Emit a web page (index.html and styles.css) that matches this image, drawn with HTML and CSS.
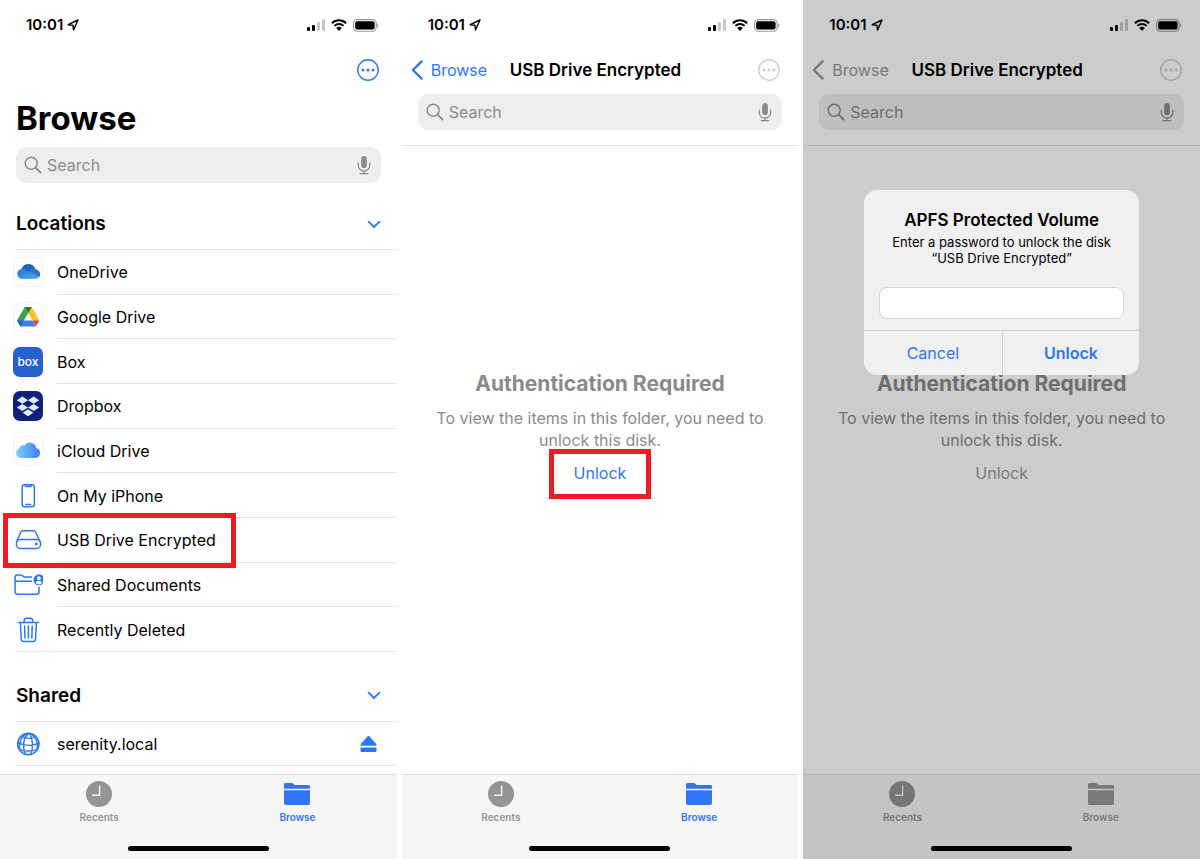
FILE: index.html
```html
<!DOCTYPE html>
<html lang="en">
<head>
  <meta charset="UTF-8">
  <meta name="viewport" content="width=device-width, initial-scale=1.0">
  <title>Files - USB Drive Encrypted</title>
  <link rel="stylesheet" href="styles.css">
</head>
<body>

<!-- Shared icons -->
<svg class="sprite" aria-hidden="true">
  <symbol id="arrow" viewBox="0 0 12 12">
    <path d="M11 1 1.200 5.700 6 6.200 6.500 11Z" fill="none" stroke="currentColor" stroke-width="1.400" stroke-linejoin="round"/>
  </symbol>
  <symbol id="signal" viewBox="0 0 18 12">
    <rect x="0" y="8" width="3" height="4" rx="1"/>
    <rect x="5" y="6" width="3" height="6" rx="1"/>
    <rect x="10" y="3" width="3" height="9" rx="1" opacity=".22"/>
    <rect x="15" y="0" width="3" height="12" rx="1" opacity=".22"/>
  </symbol>
  <symbol id="wifi" viewBox="0 0 16 12">
    <path d="M.9 4.2a10.2 10.2 0 0 1 14.2 0M3.4 6.9a6.6 6.6 0 0 1 9.2 0" fill="none" stroke="currentColor" stroke-width="2"/>
    <path d="M5.2 9.1a4.1 4.1 0 0 1 5.6 0L8 12Z"/>
  </symbol>
  <symbol id="battery" viewBox="0 0 26 13">
    <rect x=".6" y=".6" width="22.6" height="11.6" rx="3.6" fill="none" stroke="currentColor" stroke-width="1.1" opacity=".4"/>
    <rect x="2.2" y="2.2" width="19.4" height="8.4" rx="2"/>
    <path d="M24.3 4.4v4c1.4-.6 1.4-3.4 0-4Z" opacity=".45"/>
  </symbol>
  <symbol id="more" viewBox="0 0 22 22">
    <circle cx="11" cy="11" r="10.2" fill="none" stroke="currentColor" stroke-width="1.4"/>
    <circle cx="6" cy="11" r="1.5"/><circle cx="11" cy="11" r="1.5"/><circle cx="16" cy="11" r="1.5"/>
  </symbol>
  <symbol id="search" viewBox="0 0 18 18">
    <circle cx="7.2" cy="7.2" r="6" fill="none" stroke="currentColor" stroke-width="1.4"/>
    <path d="m11.6 11.6 4.9 4.9" stroke="currentColor" stroke-width="1.8" stroke-linecap="round"/>
  </symbol>
  <symbol id="mic" viewBox="0 0 14 20">
    <rect x="4.2" y="1" width="5.6" height="12" rx="2.8"/>
    <path d="M1.3 8.2v2.2a5.7 5.7 0 0 0 11.4 0V8.2M7 16v2.6M3.2 18.6h7.6" fill="none" stroke="currentColor" stroke-width="1.2" stroke-linecap="round"/>
  </symbol>
  <symbol id="down" viewBox="0 0 14 9">
    <path d="m1.6 1.6 5.4 5.4 5.4-5.4" fill="none" stroke="currentColor" stroke-width="1.8" stroke-linecap="round" stroke-linejoin="round"/>
  </symbol>
  <symbol id="back" viewBox="0 0 12 20">
    <path d="M10.6 1.4 1.9 10l8.7 8.6" fill="none" stroke="currentColor" stroke-width="2.4" stroke-linecap="round" stroke-linejoin="round"/>
  </symbol>
  <symbol id="clock" viewBox="0 0 26 26">
    <circle cx="13" cy="13" r="13"/>
    <path d="M13.6 4.4v9.8H6.2" fill="none" stroke="var(--bar)" stroke-width="1.4"/>
  </symbol>
  <symbol id="folder" viewBox="0 0 26 22">
    <path d="M0 5.8V1.6C0 .6.6 0 1.6 0h5.8c1 0 1.4.3 2.1.9l.9.8c.4.3.8.4 1.4.4h12.600c1 0 1.600.6 1.600 1.600v2.100Z"/>
    <path d="M0 7.200h26v12.800c0 1.200-.7 1.900-1.900 1.900H1.900C.7 21.900 0 21.200 0 20Z"/>
  </symbol>
</svg>

<main class="screens">

  <!-- Browse list -->
  <section class="screen">
    <div class="status">
      <span class="time">10:01</span>
      <svg class="i-arrow"><use href="#arrow"/></svg>
      <svg class="i-signal"><use href="#signal"/></svg>
      <svg class="i-wifi"><use href="#wifi"/></svg>
      <svg class="i-battery"><use href="#battery"/></svg>
    </div>
    <div class="toolbar">
      <button class="more" aria-label="More"><svg><use href="#more"/></svg></button>
    </div>
    <h1>Browse</h1>
    <label class="search">
      <svg class="i-search"><use href="#search"/></svg>
      <input type="search" placeholder="Search" aria-label="Search">
      <svg class="i-mic"><use href="#mic"/></svg>
    </label>

    <div class="group">
      <h2>Locations</h2>
      <button class="toggle" aria-label="Collapse Locations"><svg><use href="#down"/></svg></button>
    </div>
    <ul class="list locations">
      <li>
        <a href="#">
          <span class="icon tile">
            <svg viewBox="0 0 30 30">
              <defs>
                <linearGradient id="od" x1="0" y1="0" x2="1" y2="1">
                  <stop offset="0" stop-color="#3a8de0"/><stop offset="1" stop-color="#3fa0ea"/>
                </linearGradient>
              </defs>
              <path d="M8.200 12.200C9.500 8.900 12.300 7 15.400 7c3.600 0 6.300 2.300 7.100 5.400L18 17Z" fill="#2163b8"/>
              <path d="M9 21.800a5 5 0 0 1-.6-9.900c1.500-.4 3.100 0 4.300.8l8 5-9 4.100Z" fill="#2f7fd6"/>
              <path d="m14.400 13.700 3.200-1.400c1.300-.6 3.200-.7 4.900-.1 2.800.4 4.700 2.500 4.700 5 0 1.200-.4 2.200-1.100 3Z" fill="#2f6fd0"/>
              <path d="m5 19.800 11-5.200 10.200 5.500c-.9 1.100-2.100 1.700-3.700 1.700H8.900c-1.600 0-3-.8-3.900-2Z" fill="url(#od)"/>
            </svg>
          </span>
          <span>OneDrive</span>
        </a>
      </li>
      <li>
        <a href="#">
          <span class="icon tile">
            <svg viewBox="0 0 30 30">
              <path d="M11.700 5 4 18.400l3.600 6L15.200 11Z" fill="#3fa34d"/>
              <path d="M18.700 5h-3.500v6l4.100 7.400h7.100Z" fill="#f9bd2f"/>
              <path d="M11.700 5h7l-3.500 6Z" fill="#1d7a35"/>
              <path d="M26.400 18.400h-7.100l3.400 6Z" fill="#e0453a"/>
              <path d="M4 18.400h15.300l3.400 6H7.600Z" fill="#3f7fee"/>
              <path d="m4 18.400 3.600 6 3.500-6Z" fill="#2765d0"/>
            </svg>
          </span>
          <span>Google Drive</span>
        </a>
      </li>
      <li>
        <a href="#">
          <span class="icon tile box" aria-hidden="true">box</span>
          <span>Box</span>
        </a>
      </li>
      <li>
        <a href="#">
          <span class="icon tile dropbox">
            <svg viewBox="0 0 30 30">
              <path d="m9.400 5.600 5.600 3.600-5.600 3.600-5.600-3.600ZM20.600 5.600l5.600 3.600-5.600 3.600L15 9.200ZM9.400 12.900l5.600 3.600-5.600 3.600-5.600-3.600ZM20.600 12.900l5.600 3.600-5.600 3.600-5.600-3.600ZM15 18.300l5.400 3.500-5.400 3.500-5.400-3.500Z" fill="#d9f1fb"/>
            </svg>
          </span>
          <span>Dropbox</span>
        </a>
      </li>
      <li>
        <a href="#">
          <span class="icon tile">
            <svg viewBox="0 0 30 30">
              <defs>
                <linearGradient id="ic">
                  <stop offset="0" stop-color="#7fd0f8"/><stop offset="1" stop-color="#3f7cee"/>
                </linearGradient>
              </defs>
              <path d="M8 22a5 5 0 0 1-2-9.500 4 4 0 0 1 5.400-3A6.500 6.500 0 0 1 23.200 12 5.100 5.100 0 0 1 22.500 22Z" fill="url(#ic)"/>
            </svg>
          </span>
          <span>iCloud Drive</span>
        </a>
      </li>
      <li>
        <a href="#">
          <span class="icon">
            <svg viewBox="0 0 30 30" class="line">
              <rect x="9.200" y="3.700" width="12.200" height="22" rx="2.200"/>
              <path d="M12.200 4v.6c0 .6.4.9.9.9h4.400c.5 0 .9-.3.9-.9V4M12.800 23.600h5"/>
            </svg>
          </span>
          <span>On My iPhone</span>
        </a>
      </li>
      <li>
        <a href="#" class="marked">
          <span class="icon">
            <svg viewBox="0 0 30 30" class="line">
              <path d="M3.800 16.500 7.600 7.500c.5-1.200 1.300-1.700 2.500-1.700h10.200c1.200 0 2 .5 2.500 1.700l4.200 9"/>
              <rect x="3.400" y="14.600" width="24.200" height="8.800" rx="4"/>
              <circle cx="23.200" cy="19" r="1.400" fill="currentColor" stroke="none"/>
            </svg>
          </span>
          <span>USB Drive Encrypted</span>
        </a>
      </li>
      <li>
        <a href="#">
          <span class="icon">
            <svg viewBox="0 0 30 30" class="line">
              <path d="M26 17.300v4.500c0 1.600-.9 2.500-2.500 2.500H4.600c-1.600 0-2.500-.9-2.500-2.500V7.500C2.100 6 3 5 4.600 5h2.800c.8 0 1.300.2 1.900.7l.9.7c.6.500 1.100.7 1.900.7H18.500M2.300 11.300H18.500"/>
              <circle cx="25.900" cy="9.800" r="5.500" fill="currentColor" stroke="none"/>
              <circle cx="25.900" cy="8.200" r="1.900" fill="#fff" stroke="none"/>
              <path d="M22.700 13c.3-1.600 1.500-2.300 3.200-2.300s2.900.7 3.200 2.300a4.700 4.700 0 0 1-6.400 0Z" fill="#fff" stroke="none"/>
            </svg>
          </span>
          <span>Shared Documents</span>
        </a>
      </li>
      <li>
        <a href="#">
          <span class="icon">
            <svg viewBox="0 0 30 30" class="line">
              <path d="M5.400 7.600h20M11.200 7.400V5.100c0-1.200.7-1.900 1.900-1.900h4.600c1.200 0 1.900.7 1.900 1.900v2.300M7.400 7.800l.9 16.500c.1 1.500.9 2.300 2.300 2.300h9.600c1.400 0 2.200-.8 2.300-2.300l.9-16.500M11.600 11l.4 12.200M15.400 11v12.200M19.200 11l-.4 12.200"/>
            </svg>
          </span>
          <span>Recently Deleted</span>
        </a>
      </li>
    </ul>

    <div class="group">
      <h2>Shared</h2>
      <button class="toggle" aria-label="Collapse Shared"><svg><use href="#down"/></svg></button>
    </div>
    <ul class="list servers">
      <li>
        <a href="#">
          <span class="icon">
            <svg viewBox="0 0 30 30" class="line">
              <circle cx="15.300" cy="15" r="10.700"/>
              <path d="M15.500 4.400c-5 4.400-6.500 12.500-3.200 20.600M16.500 4.400c3.400 5 4 13.500 1.300 21M18 4.700c5 3 7.500 9.500 6 15.300M13.500 4.600C8.700 7 5.600 13 6.800 21M8.300 7.200c4.600 2.600 10.500 2.600 14.400 0M4.800 13.500c6 3.700 15 3.800 21.200.5M6.500 20.800c5.500 1.500 12.500 1.500 17.700-.2"/>
            </svg>
          </span>
          <span>serenity.local</span>
        </a>
        <button class="eject" aria-label="Eject serenity.local">
          <svg viewBox="0 0 16 16"><path d="M8 0c.4 0 .7.200 1 .5l6.600 7.300c.8.900.4 1.900-.7 1.900H1.100C0 9.700-.4 8.700.4 7.800L7 .5c.3-.3.6-.5 1-.5Z"/><rect y="11.600" width="16" height="4.400" rx="1"/></svg>
        </button>
      </li>
    </ul>

    <footer>
      <nav class="tabs">
        <a href="#"><svg class="i-clock"><use href="#clock"/></svg>Recents</a>
        <a href="#" class="active"><svg class="i-folder"><use href="#folder"/></svg>Browse</a>
      </nav>
      <div class="home"></div>
    </footer>
  </section>

  <!-- Locked drive -->
  <section class="screen">
    <div class="status">
      <span class="time">10:01</span>
      <svg class="i-arrow"><use href="#arrow"/></svg>
      <svg class="i-signal"><use href="#signal"/></svg>
      <svg class="i-wifi"><use href="#wifi"/></svg>
      <svg class="i-battery"><use href="#battery"/></svg>
    </div>
    <div class="toolbar">
      <a href="#" class="back"><svg><use href="#back"/></svg>Browse</a>
      <h3>USB Drive Encrypted</h3>
      <button class="more" aria-label="More" disabled><svg><use href="#more"/></svg></button>
    </div>
    <label class="search">
      <svg class="i-search"><use href="#search"/></svg>
      <input type="search" placeholder="Search" aria-label="Search">
      <svg class="i-mic"><use href="#mic"/></svg>
    </label>
    <div class="locked">
      <h2>Authentication Required</h2>
      <p>To view the items in this folder, you need to unlock this disk.</p>
      <button class="unlock marked">Unlock</button>
    </div>
    <footer>
      <nav class="tabs">
        <a href="#"><svg class="i-clock"><use href="#clock"/></svg>Recents</a>
        <a href="#" class="active"><svg class="i-folder"><use href="#folder"/></svg>Browse</a>
      </nav>
      <div class="home"></div>
    </footer>
  </section>

  <!-- Password prompt -->
  <section class="screen inactive">
    <div class="status">
      <span class="time">10:01</span>
      <svg class="i-arrow"><use href="#arrow"/></svg>
      <svg class="i-signal"><use href="#signal"/></svg>
      <svg class="i-wifi"><use href="#wifi"/></svg>
      <svg class="i-battery"><use href="#battery"/></svg>
    </div>
    <div class="toolbar">
      <a href="#" class="back"><svg><use href="#back"/></svg>Browse</a>
      <h3>USB Drive Encrypted</h3>
      <button class="more" aria-label="More" disabled><svg><use href="#more"/></svg></button>
    </div>
    <label class="search">
      <svg class="i-search"><use href="#search"/></svg>
      <input type="search" placeholder="Search" aria-label="Search">
      <svg class="i-mic"><use href="#mic"/></svg>
    </label>
    <div class="locked">
      <h2>Authentication Required</h2>
      <p>To view the items in this folder, you need to unlock this disk.</p>
      <button class="unlock">Unlock</button>
    </div>
    <footer>
      <nav class="tabs">
        <a href="#"><svg class="i-clock"><use href="#clock"/></svg>Recents</a>
        <a href="#" class="active"><svg class="i-folder"><use href="#folder"/></svg>Browse</a>
      </nav>
      <div class="home"></div>
    </footer>

    <div class="overlay">
      <form class="dialog" role="dialog" aria-labelledby="dialog-title">
        <h3 id="dialog-title">APFS Protected Volume</h3>
        <label for="password">Enter a password to unlock the disk “USB Drive Encrypted”</label>
        <input type="password" id="password">
        <div class="actions">
          <button type="button">Cancel</button>
          <button type="submit" class="primary">Unlock</button>
        </div>
      </form>
    </div>
  </section>

</main>

</body>
</html>
```
FILE: styles.css
```css
* {
  box-sizing: border-box;
}

body {
  margin: 0;
  font-family: Inter, "Liberation Sans", sans-serif;
  font-size: 16px;
  line-height: 22px;
  color: #000;
  background-color: #fff;
}

h1, h2, h3, p, ul {
  margin: 0;
  padding: 0;
}

a {
  color: inherit;
  text-decoration: none;
}

button {
  padding: 0;
  border: none;
  background: none;
  font: inherit;
  color: inherit;
  cursor: pointer;
}

svg {
  display: block;
  flex: none;
  fill: currentColor;
}

.sprite {
  display: none;
}

.screens {
  display: grid;
  grid-template-columns: repeat(3, 1fr);
  gap: 5px;
  min-height: 100vh;
}

.screen {
  --tint: #2f76f6;
  --gray: #8a8a8e;
  --line: #e4e4e6;
  --bar: #f6f6f6;
  display: flex;
  flex-direction: column;
  position: relative;
  min-width: 0;
}

/* Controls lose their tint behind the dialog */
.inactive {
  --tint: #98989c;
}

/* Status bar */
.status {
  display: flex;
  align-items: center;
  height: 50px;
  padding: 0 18px 0 26px;
}

.time {
  font-weight: 600;
  font-size: 15px;
}

.i-arrow {
  width: 12px;
  height: 12px;
  margin: 0 auto 0 4px;
}

.i-signal {
  width: 18px;
  height: 12px;
}

.i-wifi {
  width: 16px;
  height: 12px;
  margin: 0 6px;
}

.i-battery {
  width: 26px;
  height: 13px;
}

/* Navigation bar */
.toolbar {
  display: grid;
  grid-template-columns: 1fr auto 1fr;
  align-items: center;
  height: 40px;
  padding: 0 18px 0 9px;
}

.toolbar h3 {
  font-size: 17px;
  font-weight: 600;
}

.back {
  display: flex;
  align-items: center;
  gap: 8px;
  color: var(--tint);
}

.back svg {
  width: 12px;
  height: 20px;
}

.more {
  grid-column: 3;
  justify-self: end;
  color: var(--tint);
}

.more:disabled {
  color: #cfcfd1;
}

.more svg {
  width: 22px;
  height: 22px;
}

h1 {
  padding: 8px 16px;
  font-size: 33px;
  line-height: 40px;
}

.search {
  display: flex;
  align-items: center;
  gap: 5px;
  height: 36px;
  margin: 1px 16px 0;
  padding: 0 10px 0 8px;
  border-radius: 10px;
  background-color: #eeeeef;
  color: var(--gray);
}

.toolbar + .search {
  margin-top: 4px;
}

.search input {
  flex: 1;
  min-width: 0;
  padding: 0;
  border: none;
  outline: none;
  background: none;
  font: inherit;
}

.search input::placeholder {
  color: var(--gray);
  opacity: 1;
}

.i-search {
  width: 18px;
  height: 18px;
}

.i-mic {
  width: 14px;
  height: 20px;
}

/* Location groups */
.group {
  display: flex;
  justify-content: space-between;
  align-items: center;
  height: 67px;
  margin-left: 16px;
  padding: 16px 16px 0 0;
  border-bottom: 1px solid var(--line);
}

.list + .group {
  height: 70px;
  padding-top: 18px;
}

.group h2 {
  font-size: 19px;
  font-weight: 600;
}

.toggle {
  color: var(--tint);
}

.toggle svg {
  width: 14px;
  height: 9px;
}

.list {
  display: grid;
  grid-auto-rows: minmax(44px, 1fr);
  list-style: none;
}

.locations {
  flex: 1;
}

.servers {
  margin-bottom: 8px;
}

.list li {
  display: flex;
  justify-content: space-between;
  align-items: center;
  padding: 0 20px 0 8px;
  background: linear-gradient(var(--line), var(--line)) 57px 100% / 100% 1px no-repeat;
}

.list li:last-child {
  background-position-x: 16px;
}

.list a {
  display: flex;
  align-items: center;
  gap: 14px;
  height: 100%;
  padding: 0 15px 0 5px;
}

.icon {
  width: 30px;
  height: 30px;
  color: var(--tint);
}

.line {
  fill: none;
  stroke: currentColor;
  stroke-width: 1.5;
  stroke-linecap: round;
}

.tile {
  border-radius: 7px;
  box-shadow: inset 0 0 0 1px #f1f1f2;
}

.box {
  background-color: #2560cf;
  box-shadow: none;
  color: #fff;
  font-size: 12px;
  font-weight: 500;
  line-height: 29px;
  text-align: center;
}

.dropbox {
  background-color: #10207a;
  box-shadow: none;
}

.marked {
  outline: 5px solid #ed1c24;
}

.eject {
  color: var(--tint);
}

.eject svg {
  width: 17px;
  height: 16px;
}

/* Locked folder message */
.locked {
  flex: 1;
  display: flex;
  flex-direction: column;
  align-items: center;
  justify-content: center;
  margin-top: 15px;
  padding: 0 28px 55px;
  border-top: 1px solid var(--line);
  color: var(--gray);
  text-align: center;
}

.locked h2 {
  margin-bottom: 10px;
  font-size: 21px;
  line-height: 26px;
}

.unlock {
  height: 40px;
  margin-top: 3px;
  padding: 0 20px 2px;
  color: var(--tint);
}

/* Tab bar */
footer {
  height: 85px;
  border-top: 1px solid #dcdcde;
  background-color: var(--bar);
}

.tabs {
  display: grid;
  grid-template-columns: 1fr 1fr;
  height: 71px;
  color: #949496;
  font-size: 10px;
  font-weight: 600;
  line-height: 14px;
}

.tabs a {
  display: flex;
  flex-direction: column;
  align-items: center;
  gap: 3px;
  padding-top: 6px;
}

.tabs .active {
  color: var(--tint);
}

.i-clock {
  width: 26px;
  height: 26px;
}

.i-folder {
  width: 26px;
  height: 22px;
  margin: 2px 0;
}

.home {
  width: 141px;
  height: 5px;
  margin: 0 auto;
  border-radius: 3px;
  background-color: #000;
}

/* Password dialog */
.overlay {
  display: flex;
  justify-content: center;
  align-items: flex-start;
  position: absolute;
  inset: 0;
  padding-top: 190px;
  background-color: rgba(0, 0, 0, 0.2);
}

.dialog {
  display: flex;
  flex-direction: column;
  width: 275px;
  padding-top: 19px;
  border-radius: 13px;
  background-color: #f0f0f0;
  text-align: center;
  overflow: hidden;
}

.dialog h3 {
  font-size: 17px;
  font-weight: 600;
}

.dialog label {
  padding: 3px 24px 0;
  font-size: 13px;
  line-height: 16px;
}

.dialog input {
  height: 32px;
  margin: 21px 15px 11px;
  padding: 0 8px;
  border: 1px solid #d4d4d6;
  border-radius: 8px;
  background-color: #fff;
  font: inherit;
}

.actions {
  display: grid;
  grid-template-columns: 1fr 1fr;
  border-top: 1px solid #d2d2d4;
  color: #2f76f6;
}

.actions button {
  height: 44px;
}

.actions .primary {
  border-left: 1px solid #d2d2d4;
  font-weight: 600;
}
```
